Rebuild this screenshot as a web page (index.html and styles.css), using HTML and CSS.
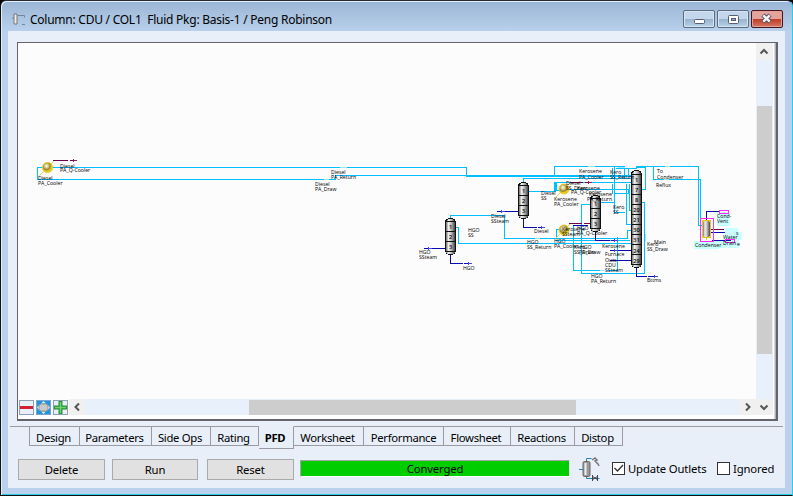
FILE: index.html
```html
<!DOCTYPE html>
<html lang="en">
<head>
<meta charset="utf-8">
<title>Column: CDU / COL1</title>
<link rel="stylesheet" href="styles.css">
</head>
<body>
<main class="window">
  <header class="titlebar">
    <svg class="app-icon" width="14" height="14" viewBox="0 0 14 14"><path d="M2 1h3v10H2z" fill="#eee" stroke="#777"/><path d="M0 5h2M5.500 2.500h7v2M10 11.500h3" fill="none" stroke="#71869c"/></svg>
    <h1 class="title">Column: CDU / COL1&nbsp; Fluid Pkg: Basis-1 / Peng Robinson</h1>
    <div class="controls">
      <button class="control" aria-label="Minimize"><svg width="28" height="14"><rect x="8.500" y="7.500" width="10" height="4" rx="1" fill="#fff" stroke="#565e70"/></svg></button>
      <button class="control" aria-label="Maximize"><svg width="28" height="14"><rect x="8.500" y="3.500" width="10" height="8" rx="1" fill="#fff" stroke="#565e70"/><rect x="11.500" y="6.500" width="4" height="2" fill="#91adc9" stroke="#565e70"/></svg></button>
      <button class="control close" aria-label="Close"><svg width="28" height="14"><path d="M9 3l7 7M16 3l-7 7" stroke="#4b4b5a" stroke-width="4.400"/><path d="M9.300 3.300l6.400 6.400M15.700 3.300l-6.400 6.400" stroke="#f4f4f4" stroke-width="2.500"/></svg></button>
    </div>
  </header>
  <section class="client">
    <div class="frame">
      <div class="view">
        <svg class="diagram" width="738" height="356" viewBox="18 43 738 356">
          <defs>
            <linearGradient id="metal"><stop offset="0" stop-color="#555"/><stop offset=".3" stop-color="#eee"/><stop offset=".55" stop-color="#c4c4c4"/><stop offset="1" stop-color="#333"/></linearGradient>
            <radialGradient id="ball" cx=".4" cy=".35"><stop offset="0" stop-color="#fff"/><stop offset=".35" stop-color="#d8cf94"/><stop offset=".75" stop-color="#978534"/><stop offset="1" stop-color="#e8c91e"/></radialGradient>
            <g id="cooler" shape-rendering="auto"><path d="M-8 8L6 -6" stroke="#ecd23c" stroke-width="1"/><circle r="5" fill="url(#ball)" stroke="#ecca22"/></g>
            <g id="stripper"><rect x=".5" y=".5" width="10" height="36" rx="4" fill="url(#metal)" stroke="#111"/><path d="M0 3.500h11M0 13.500h11M0 23.500h11M0 33.500h11" stroke="#111"/><g class="stage"><text x="5.500" y="11">1</text><text x="5.500" y="21">2</text><text x="5.500" y="31">3</text></g></g>
          </defs>
          <g class="highlight">
            <path d="M717 212h13v14h-13zM725 228h13v4h4v8h-3v8h-14zM694 241h25v8h-25zM719 241h18v7h-18z"/>
          </g>
          <g class="stream">
            <path d="M42 167.500H37.500V179.500H335V175.500H631M52 167.500H466.500V176.500H631"/>
            <path d="M554.500 175V166.500H624.500V178M614.500 167V187M612.500 168v10M628.500 168V175M616 168H636.500V166.500H698.500V225.500H702M636 167H645.500V189.500H641M653.500 167V179.500H700.500V225"/>
            <path d="M523.500 182V178.500H632M529 191.500H555V182.500H632M556.500 182V190H569M554.500 182v9M569 189.500H628.500V193H614.500V202.500H595.500V195M612.500 184v10M614 184v10M626.500 184v40H632M629.500 184v26H632"/>
            <path d="M450.500 218V215.500H504.500V238.500H627.500V230.500H632M456 227.500H458.500V243.500H631M563 229.500H556.500V238M590 204.500H581.500V273.500H644.500V202.500H641M573.500 225V270.500H617.500V237M614.500 187V212H625M556 240.500H630"/>
          </g>
          <g class="stream soft"><path d="M340 167.500h7M324 179.500h5M588 166.500h7M618 167.500h7M665 166.500h5M535 238.500h5M600 270.500h8M645.500 234v7M664 179.500h5"/></g>
          <g class="energy"><path d="M53 160.500H68M70 160.500h6M570 182.500h13M585 182.500h6M569 223.500h13M584 223.500h7M707 229.500h17"/></g>
          <g class="feed">
            <path d="M424 248.500H445M497 211.500H518M523.500 219V227.500H537M538 227.500h6M450.500 255V263.500H463M464 263.500h7M573 225.500H588M595.500 232V240.500H610M611 240.500h6M610 250.500H631M610 260.500H631M636.500 267V276.500H647M648 276.500h9M706.500 220V211.500H719M707 232.500H725M712 240.500H731"/>
          </g>
          <path class="arrows" d="M428 247l4 1.500-4 1.500zM501 210l4 1.500-4 1.500zM541 226l4 1.500-4 1.500zM468 262l4 1.500-4 1.500zM614 239l4 1.500-4 1.500zM614 249l4 1.500-4 1.500zM654 275l4 1.500-4 1.500z"/>
          <path d="M73 159l4 1.500-4 1.500zM588 181l4 1.500-4 1.500z" fill="#8a245c"/>
          <use href="#cooler" x="47.500" y="167.500"/><use href="#cooler" x="564" y="189"/><use href="#cooler" x="564" y="230"/>
          <use href="#stripper" x="518" y="182"/><use href="#stripper" x="445" y="218"/><use href="#stripper" x="590" y="195"/>
          <g><rect x="631.500" y="170.500" width="10" height="97" rx="4" fill="url(#metal)" stroke="#111"/><path d="M631 174.500h11M631 184.500h11M631 194.500h11M631 204.500h11M631 214.500h11M631 224.500h11M631 234.500h11M631 244.500h11M631 254.500h11M631 264.500h11" stroke="#111"/>
            <g class="stage"><text x="636.500" y="181.500">1</text><text x="636.500" y="191.500">7</text><text x="636.500" y="201.500">8</text><text x="636.500" y="211.500">20</text><text x="636.500" y="221.500">21</text><text x="636.500" y="231.500">30</text><text x="636.500" y="241.500">31</text><text x="636.500" y="252.500">24</text><text x="636.500" y="262.500">29</text></g></g>
          <rect x="702.500" y="220.500" width="8" height="17" rx="2" fill="url(#metal)" stroke="#e5c41d" stroke-width="1.500"/><path d="M706.500 238v2" stroke="#e5c41d"/>
          <path class="selection" d="M700.500 218.500h13v23h-13zM719.500 210.500h9v3h-9zM725.500 239.500h9v3h-9z"/>
          <g class="labels">
            <text x="60" y="167.500">Diesel</text><text x="60" y="172.300">PA_Q-Cooler</text>
            <text x="38" y="179.500">Diesel</text><text x="38" y="184.500">PA_Cooler</text>
            <text x="331" y="174">Diesel</text><text x="331" y="179.300">PA_Return</text>
            <text x="315" y="186">Diesel</text><text x="315" y="191">PA_Draw</text>
            <text x="541" y="195">Diesel</text><text x="541" y="200">SS</text>
            <text x="491" y="218">Diesel</text><text x="491" y="223">SSteam</text>
            <text x="534" y="233">Diesel</text>
            <text x="468" y="232">HGO</text><text x="468" y="237">SS</text>
            <text x="419" y="254">HGO</text><text x="419" y="259">SSteam</text>
            <text x="463" y="270">HGO</text>
            <text x="527" y="243.500">HGO</text><text x="527" y="249">SS_Return</text>
            <text x="579" y="173">Kerosene</text><text x="579" y="179">PA_Cooler</text>
            <text x="610" y="174">Kero</text><text x="610" y="179">SS_Return</text>
            <text x="566" y="185">Diesel</text><text x="566" y="189.500">SS_Draw</text>
            <text x="577" y="189.500">Kerosene</text><text x="571" y="194">PA_Q-Cooler</text><text x="589" y="196">Kerosene</text><text x="587" y="201">PA_Return</text>
            <text x="554" y="201">Kerosene</text><text x="554" y="206">PA_Cooler</text>
            <text x="613" y="209">Kero</text><text x="613" y="214">SS</text>
            <text x="562" y="231">Kerosene</text><text x="562" y="236">SSteam</text><text x="577" y="230">HGO</text><text x="577" y="234.500">PA_Q-Cooler</text>
            <text x="554" y="243">HGO</text><text x="554" y="248">PA_Cooler</text>
            <text x="574" y="249">Kero</text><text x="580" y="249">HGO</text><text x="574" y="254">SS_Draw</text><text x="579" y="254">PA_Draw</text>
            <text x="602" y="247.500">Kerosene</text><text x="605" y="256">Furnace</text><text x="605" y="262">Outs</text>
            <text x="605" y="267">CDU</text><text x="605" y="272">SSteam</text>
            <text x="591" y="278">HGO</text><text x="591" y="283">PA_Return</text>
            <text x="657" y="173">To</text><text x="657" y="178.500">Condenser</text><text x="656" y="186.500">Reflux</text>
            <text x="647" y="246">Kero</text><text x="654" y="244">Main</text><text x="647" y="251">SS_Draw</text>
            <text x="647" y="282">Bttms</text>
            <text x="717" y="218">Cond-</text><text x="717" y="223">Vent</text>
            <text x="723" y="239">Water</text><text x="723" y="245">Drain</text><text x="737" y="246">e</text><text x="736" y="235">s</text>
            <text x="695" y="247">Condenser</text>
          </g>
        </svg>
        <div class="vbar"><span class="arrow"><svg width="16" height="17"><path d="M4.500 10.500L8 7l3.500 3.500"/></svg></span><i class="vthumb"></i></div>
        <div class="hrow">
          <div class="tools">
            <svg width="15" height="15"><rect x=".5" y=".5" width="14" height="14" fill="#e9eff9" stroke="#8ca0b8"/><path d="M1 7.500h13" stroke="#d32130" stroke-width="3"/></svg>
            <svg width="15" height="15"><rect x=".5" y=".5" width="14" height="14" fill="#2593dc" stroke="#77a7d0"/><path d="M7.500 1l2.500 2.500H5zM7.500 14L5 11.500h5zM1 7.500L3 5v5zM14 7.500L12 5v5z" fill="#dcecf8"/><rect x="3" y="4" width="9" height="7" rx="2.500" fill="#c9c9c9" stroke="#999"/></svg>
            <svg width="15" height="15"><rect x=".5" y=".5" width="14" height="14" fill="#e9eff9" stroke="#8ca0b8"/><path d="M7.500 1v13M1 7.500h13" stroke="#25933a" stroke-width="4"/><path d="M7.500 2v11M2 7.500h11" stroke="#70d36c" stroke-width="1.500"/></svg>
          </div>
          <span class="arrow"><svg width="17" height="16"><path d="M10 4.500L6.500 8l3.500 3.500"/></svg></span>
          <div class="htrack"><i class="hthumb"></i></div>
          <span class="arrow"><svg width="17" height="16"><path d="M7 4.500L10.500 8 7 11.500"/></svg></span>
        </div>
        <span class="arrow corner"><svg width="16" height="16"><path d="M4.500 6.500L8 10l3.500-3.500"/></svg></span>
      </div>
    </div>
    <nav class="tabs">
      <a class="tab design">Design</a><a class="tab parameters">Parameters</a><a class="tab sideops">Side Ops</a><a class="tab rating">Rating</a><a class="tab pfd">PFD</a><a class="tab worksheet">Worksheet</a><a class="tab performance">Performance</a><a class="tab flowsheet">Flowsheet</a><a class="tab reactions">Reactions</a><a class="tab distop">Distop</a>
    </nav>
    <footer class="actions">
      <button class="button">Delete</button><button class="button run">Run</button><button class="button reset">Reset</button>
      <div class="status">Converged</div>
      <svg class="column-icon" width="22" height="25" viewBox="0 0 22 25"><path d="M0 12.500h4M7.500 5V1.500h5M7.500 19v2.500h13" fill="none" stroke="#2581bc"/><rect x="4" y="4.500" width="7" height="15" rx="1.500" fill="#999" stroke="#666"/><path d="M6.500 6v12" stroke="#eee" stroke-width="2"/><path d="M13 3l3-2 2 2-2 1 3 3 1 2" fill="none" stroke="#777" stroke-width="1.500"/><path d="M13.500 18v6M18.500 18v6M13 19l6 4M13 23l6-4" stroke="#444"/></svg>
      <label class="check update"><span class="box"><svg width="11" height="11"><path d="M1.500 5l3 3L10 2" fill="none" stroke="#333" stroke-width="1.300"/></svg></span>Update Outlets</label>
      <label class="check"><span class="box"></span>Ignored</label>
    </footer>
  </section>
</main>
</body>
</html>
```

FILE: styles.css
```css
* { box-sizing: border-box; }
body { margin: 0; background: #000; font: 11.3px/16px "Noto Sans", "Open Sans", sans-serif; color: #000; overflow: hidden; }
svg { display: block; flex: none; }
.window { width: 793px; height: 496px; border: 1px solid #111; border-right-color: #25cdf0; border-top-color: #282830; border-radius: 6px 6px 0 0; background: linear-gradient(#9ab5d4, #b9d1ec 31px, #b9d1ec); box-shadow: inset 1px 1px #e2eefa, inset 0 -1px #29cdea; padding: 0 7px 7px; }
.titlebar { height: 30px; display: flex; align-items: flex-start; padding-left: 4px; }
.app-icon { margin-top: 12px; }
.title { margin: 11px 0 0 4px; font-size: 12px; font-weight: 400; line-height: 16px; white-space: nowrap; letter-spacing: -.25px; }
.controls { display: flex; gap: 2px; margin: 9px 2px 0 auto; }
.control { width: 32px; height: 18px; padding: 1px 2px; border: 1px solid #5b6b80; border-radius: 2px; background: linear-gradient(#c3d6eb 0 48%, #96b1cc 49%, #b8d2e8); box-shadow: inset 0 0 0 1px #d6e5f3; }
.close { border-color: #48151c; background: linear-gradient(#e4a39b 0 48%, #bc3a26 49%, #d77861); box-shadow: inset 0 0 0 1px #e2a198; }
.client { height: 457px; background: #e9eff9; padding: 11px 7px 0 9px; }
.frame { width: 761px; height: 379px; border: 1px solid #65636b; border-right: 2px solid #65636b; border-bottom: 2px solid #65636b; padding: 0 3px 3px 0; background: linear-gradient(90deg, #fff 756px, #aeb0b8 757px); }
.view { height: 373px; display: grid; grid-template: 356px 17px / 738px 17px; background: #fcfcfc; border-right: 1px solid #fff; border-bottom: 1px solid #fff; }
.diagram { font-family: "Open Sans", sans-serif; font-size: 5.2px; shape-rendering: crispEdges; }
.labels { font-weight: 500; }
.stream { fill: none; stroke: #00bfff; }
.soft { stroke: #9ce6ff; }
.energy { stroke: #70004b; }
.feed { fill: none; stroke: #0909ad; }
.arrows { fill: #4646e0; }
.highlight { fill: #c9ffff; }
.selection { fill: none; stroke: #ff2cff; }
.stage { font-size: 5.5px; font-weight: 600; text-anchor: middle; }
.vbar { background: #e8f0fb; }
.arrow { display: block; background: #f0f0f0; }
.arrow path { fill: none; stroke: #555; stroke-width: 2; }
.vthumb { display: block; width: 15px; height: 248px; margin: 46px 0 0 1px; background: #cdcdcd; }
.hrow { display: flex; height: 16px; }
.tools { display: flex; gap: 2px; padding: 1px 0 0 1px; width: 51px; }
.htrack { flex: 1; background: #e8f0fb; }
.hthumb { display: block; width: 327px; height: 15px; margin: 1px 0 0 163px; background: #cdcdcd; }
.corner { height: 16px; }
.tabs { display: flex; align-items: flex-start; height: 33px; margin: 5px -5px 0 -7px; padding-left: 19px; background: linear-gradient(#999ba1, #999ba1) 0 0 / 100% 1px no-repeat; white-space: nowrap; letter-spacing: -.3px; }
.tab { height: 20px; padding-right: 2px; border: 1px solid #999ba1; border-left: 0; line-height: 21px; text-align: center; }
.design { width: 51px; border-left: 1px solid #999ba1; }
.parameters { width: 72px; }
.sideops { width: 59px; }
.rating { width: 48px; }
.pfd { width: 35px; height: 23px; font-weight: 700; background: #e9eff9; border-top-color: #e9eff9; }
.worksheet { width: 70px; }
.performance { width: 80px; padding-right: 0; }
.flowsheet { width: 67px; }
.reactions { width: 64px; }
.distop { width: 48px; }
.actions { display: flex; align-items: flex-start; letter-spacing: -.15px; }
.button { width: 87px; height: 21px; padding: 0; border: 1px solid #aaa; background: #e1e1e1; font: inherit; color: inherit; letter-spacing: inherit; line-height: 20px; margin-left: 1px; }
.run { margin-left: 7px; width: 86px; }
.reset { margin-left: 9px; }
.status { width: 270px; height: 17px; margin: 1px 0 0 6px; border: 1px solid #a5a5a5; border-right-color: #fff; border-bottom-color: #fff; background: #00cd00; text-align: center; line-height: 15px; }
.column-icon { margin: -2px 0 0 9px; }
.check { display: flex; align-items: center; margin: 2px 0 0 11px; height: 15px; white-space: nowrap; }
.update { width: 94px; }
.box { width: 13px; height: 13px; flex: none; margin-right: 3px; border: 1px solid #333; background: #fff; }
```
